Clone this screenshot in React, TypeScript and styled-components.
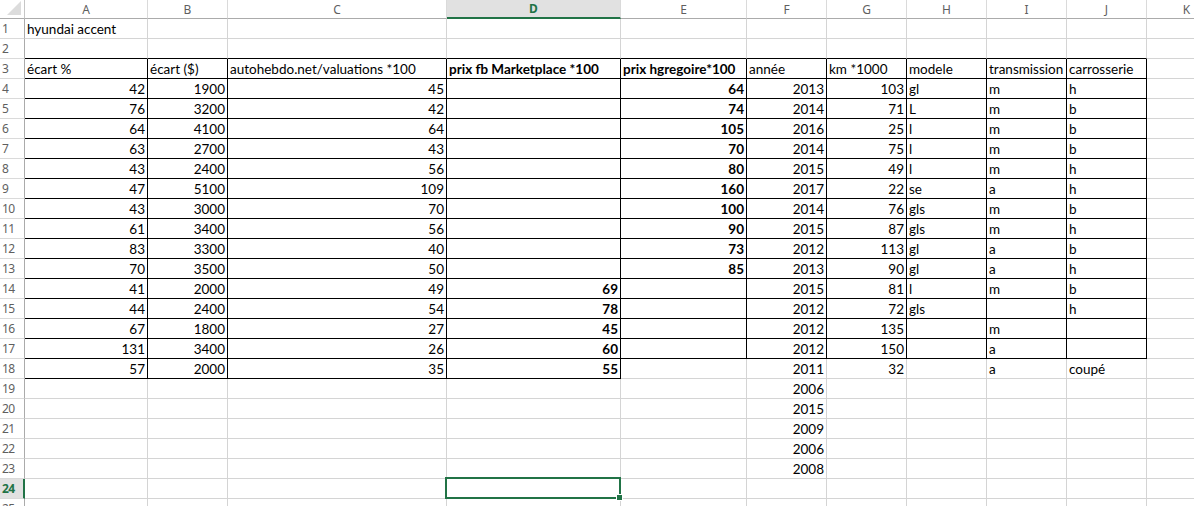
import styled, { createGlobalStyle } from 'styled-components'

const GlobalStyle = createGlobalStyle`
  html, body {
    margin: 0;
    padding: 0;
    background: #ffffff;
    overflow: hidden;
  }
`

const GRID = '#d4d4d4'
const INK = '#000000'
const GREEN = '#217346'

const colWidths = [25, 123, 80, 219, 174, 126, 80, 80, 80, 80, 80, 80]
const letters = ['A', 'B', 'C', 'D', 'E', 'F', 'G', 'H', 'I', 'J', 'K']

type Cell = string | number

const rows: Record<number, Cell[]> = {
  1: ['hyundai accent'],
  3: ['écart %', 'écart ($)', 'autohebdo.net/valuations *100', 'prix fb Marketplace *100', 'prix hgregoire*100', 'année', 'km *1000', 'modele', 'transmission', 'carrosserie'],
  4: [42, 1900, 45, '', 64, 2013, 103, 'gl', 'm', 'h'],
  5: [76, 3200, 42, '', 74, 2014, 71, 'L', 'm', 'b'],
  6: [64, 4100, 64, '', 105, 2016, 25, 'l', 'm', 'b'],
  7: [63, 2700, 43, '', 70, 2014, 75, 'l', 'm', 'b'],
  8: [43, 2400, 56, '', 80, 2015, 49, 'l', 'm', 'h'],
  9: [47, 5100, 109, '', 160, 2017, 22, 'se', 'a', 'h'],
  10: [43, 3000, 70, '', 100, 2014, 76, 'gls', 'm', 'b'],
  11: [61, 3400, 56, '', 90, 2015, 87, 'gls', 'm', 'h'],
  12: [83, 3300, 40, '', 73, 2012, 113, 'gl', 'a', 'b'],
  13: [70, 3500, 50, '', 85, 2013, 90, 'gl', 'a', 'h'],
  14: [41, 2000, 49, 69, '', 2015, 81, 'l', 'm', 'b'],
  15: [44, 2400, 54, 78, '', 2012, 72, 'gls', '', 'h'],
  16: [67, 1800, 27, 45, '', 2012, 135, '', 'm', ''],
  17: [131, 3400, 26, 60, '', 2012, 150, '', 'a', ''],
  18: [57, 2000, 35, 55, '', 2011, 32, '', 'a', 'coupé'],
  19: ['', '', '', '', '', 2006],
  20: ['', '', '', '', '', 2015],
  21: ['', '', '', '', '', 2009],
  22: ['', '', '', '', '', 2006],
  23: ['', '', '', '', '', 2008],
}

const isBold = (r: number, c: number) => (c === 3 || c === 4) && r >= 3 && r <= 18

const bordered = (r: number, c: number) => {
  if (r >= 3 && r <= 17 && c >= 0 && c <= 9) return true
  if (r === 18 && c >= 0 && c <= 3) return true
  return false
}

const SELECTED_ROW = 24
const SELECTED_COL = 3

const Sheet = styled.div`
  display: grid;
  grid-template-columns: ${colWidths.map((w) => `${w}px`).join(' ')};
  grid-auto-rows: 20px;
  grid-template-rows: 19px;
  width: max-content;
  font-family: Lato, 'Open Sans', sans-serif;
`

const Corner = styled.div`
  border-right: 1px solid #c6c6c6;
  border-bottom: 1px solid #ababab;
  display: flex;
  align-items: flex-end;
  justify-content: flex-end;
  padding: 0 3px 3px 0;
  box-sizing: border-box;
`

const ColHead = styled.div<{ $active?: boolean }>`
  box-sizing: border-box;
  display: flex;
  align-items: center;
  justify-content: center;
  font-family: 'Noto Sans', 'Open Sans', sans-serif;
  font-size: 12px;
  color: ${({ $active }) => ($active ? GREEN : '#5f5f5f')};
  font-weight: ${({ $active }) => ($active ? 700 : 400)};
  background: ${({ $active }) => ($active ? '#e1e1e1' : '#ffffff')};
  border-right: 1px solid #dadada;
  border-bottom: ${({ $active }) => ($active ? `2px solid ${GREEN}` : '1px solid #ababab')};
`

const RowHead = styled.div<{ $active?: boolean }>`
  box-sizing: border-box;
  display: flex;
  align-items: center;
  padding-left: 2px;
  font-family: 'Noto Sans', 'Open Sans', sans-serif;
  font-size: 12px;
  letter-spacing: -0.5px;
  color: ${({ $active }) => ($active ? GREEN : '#5f5f5f')};
  font-weight: ${({ $active }) => ($active ? 700 : 400)};
  background: ${({ $active }) => ($active ? '#e1e1e1' : '#ffffff')};
  border-bottom: 1px solid #dadada;
  border-right: ${({ $active }) => ($active ? `2px solid ${GREEN}` : '1px solid #ababab')};
`

const DataCell = styled.div<{
  $num?: boolean
  $bold?: boolean
  $right: string
  $bottom: string
  $overflow?: boolean
  $layer?: number
}>`
  position: relative;
  box-sizing: border-box;
  border-right: 1px solid ${({ $right }) => $right};
  border-bottom: 1px solid ${({ $bottom }) => $bottom};
  padding: 0 2px;
  font-size: 13.5px;
  line-height: 20px;
  color: #000;
  white-space: nowrap;
  overflow: ${({ $overflow }) => ($overflow ? 'visible' : 'hidden')};
  z-index: ${({ $layer }) => $layer ?? 0};
  text-align: ${({ $num }) => ($num ? 'right' : 'left')};
  font-weight: ${({ $bold }) => ($bold ? 700 : 400)};
`

const Selection = styled.div`
  position: absolute;
  top: -2px;
  left: -2px;
  right: -1px;
  bottom: -1px;
  border: 2px solid ${GREEN};
  pointer-events: none;

  &::after {
    content: '';
    position: absolute;
    right: -4px;
    bottom: -4px;
    width: 5px;
    height: 5px;
    background: ${GREEN};
    border: 1px solid #fff;
  }
`

const App = () => {
  const cells: JSX.Element[] = []

  cells.push(
    <Corner key="corner">
      <svg width="14" height="14" viewBox="0 0 14 14">
        <polygon points="14,0 14,14 0,14" fill="#dcdcdc" />
      </svg>
    </Corner>
  )
  letters.forEach((l, i) => {
    cells.push(
      <ColHead key={`h${l}`} $active={i === SELECTED_COL}>
        {l}
      </ColHead>
    )
  })

  for (let r = 1; r <= 25; r++) {
    cells.push(
      <RowHead key={`r${r}`} $active={r === SELECTED_ROW}>
        {r}
      </RowHead>
    )
    const data = rows[r] || []
    for (let c = 0; c < letters.length; c++) {
      const v = data[c] ?? ''
      const right = bordered(r, c) || bordered(r, c + 1) ? INK : GRID
      const bottom = bordered(r, c) || bordered(r + 1, c) ? INK : GRID
      const selected = r === SELECTED_ROW && c === SELECTED_COL
      cells.push(
        <DataCell
          key={`c${r}-${c}`}
          $num={typeof v === 'number'}
          $bold={isBold(r, c)}
          $right={right}
          $bottom={bottom}
          $overflow={r === 1 || selected}
          $layer={selected ? 3 : r === 1 ? 1 : 0}
        >
          {v}
          {selected && <Selection />}
        </DataCell>
      )
    }
  }

  return (
    <>
      <GlobalStyle />
      <Sheet>{cells}</Sheet>
    </>
  )
}

export default App
